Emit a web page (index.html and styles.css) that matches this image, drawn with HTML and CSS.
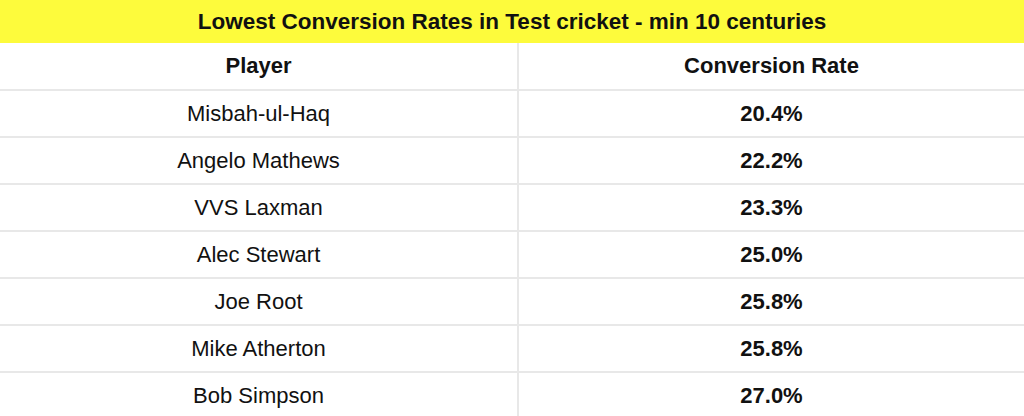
FILE: index.html
```html
<!DOCTYPE html>
<html>
<head>
<meta charset="utf-8">
<link rel="stylesheet" href="styles.css">
</head>
<body>
<div class="table">
  <div class="title">Lowest Conversion Rates in Test cricket - min 10 centuries</div>
  <div class="grid">
    <div class="cell head">Player</div>
    <div class="cell head">Conversion Rate</div>
    <div class="cell">Misbah-ul-Haq</div>
    <div class="cell num">20.4%</div>
    <div class="cell">Angelo Mathews</div>
    <div class="cell num">22.2%</div>
    <div class="cell">VVS Laxman</div>
    <div class="cell num">23.3%</div>
    <div class="cell">Alec Stewart</div>
    <div class="cell num">25.0%</div>
    <div class="cell">Joe Root</div>
    <div class="cell num">25.8%</div>
    <div class="cell">Mike Atherton</div>
    <div class="cell num">25.8%</div>
    <div class="cell">Bob Simpson</div>
    <div class="cell num">27.0%</div>
  </div>
</div>
</body>
</html>
```
FILE: styles.css
```css
html, body {
  margin: 0;
  padding: 0;
  background: #ffffff;
  overflow: hidden;
}
.table {
  width: 1024px;
  font-family: "Liberation Sans", Arial, sans-serif;
  color: #111111;
}
.title {
  height: 43px;
  background: #fdfb3c;
  display: flex;
  align-items: center;
  justify-content: center;
  font-weight: bold;
  font-size: 22.5px;
}
.grid {
  display: grid;
  grid-template-columns: 517px 1fr;
  grid-template-rows: 46px;
  grid-auto-rows: 45px;
  background: #e8e8e8;
  column-gap: 2px;
  row-gap: 2px;
}
.cell {
  background: #ffffff;
  display: flex;
  align-items: center;
  justify-content: center;
  font-size: 22px;
}
.head, .num {
  font-weight: bold;
}
```
